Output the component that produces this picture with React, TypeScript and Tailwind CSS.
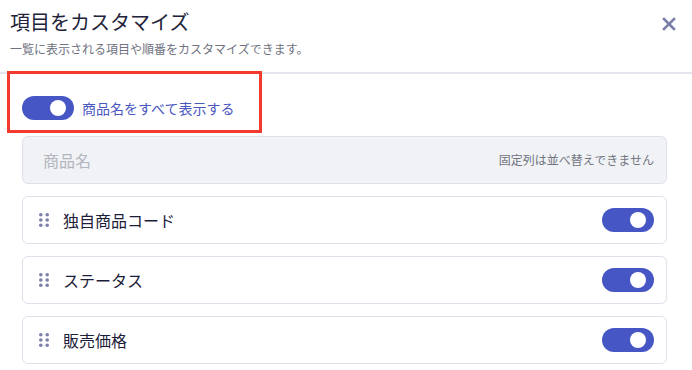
import React, { useState } from 'react'

const font = { fontFamily: '"Noto Sans CJK JP", "Noto Sans", sans-serif' }

function Toggle({ on, onChange }: { on: boolean; onChange: () => void }) {
  return (
    <button
      type="button"
      onClick={onChange}
      className={`relative flex h-[24px] w-[52px] shrink-0 items-center rounded-full transition-colors ${on ? 'bg-[#4656c5]' : 'bg-[#c9ccd8]'}`}
    >
      <span className={`absolute top-[4px] h-[16px] w-[16px] rounded-full bg-white transition-all ${on ? 'left-[28px]' : 'left-[8px]'}`} />
    </button>
  )
}

function DragHandle() {
  return (
    <svg width="10" height="14" viewBox="0 0 10 14" className="shrink-0">
      {[1.8, 7, 12.2].map((y) =>
        [1.8, 8.2].map((x) => <circle key={`${x}-${y}`} cx={x} cy={y} r="1.8" fill="#7b80a8" />),
      )}
    </svg>
  )
}

const columns = ['独自商品コード', 'ステータス', '販売価格']

export default function App() {
  const [showAll, setShowAll] = useState(true)
  const [visible, setVisible] = useState<boolean[]>([true, true, true])

  return (
    <div className="relative h-[370px] w-[692px] overflow-hidden bg-white" style={font}>
      <div className="border-b-2 border-[#e3e6ee] px-[10px] pb-[15px] pt-[8px]">
        <div className="flex items-start justify-between">
          <h1 className="text-[20px] leading-[28px] text-[#22233a]">項目をカスタマイズ</h1>
          <button type="button" className="mr-[6px] mt-[9px] text-[#7a7fa8]">
            <svg width="14" height="14" viewBox="0 0 14 14" fill="none" stroke="currentColor" strokeWidth="2.6" strokeLinecap="square">
              <path d="M2 2l10 10M12 2L2 12" />
            </svg>
          </button>
        </div>
        <p className="mt-[5px] text-[12px] leading-[16px] text-[#6f7280]">一覧に表示される項目や順番をカスタマイズできます。</p>
      </div>

      <div className="px-[22px]">
        <div className="flex items-center gap-[8px] pt-[22px]">
          <Toggle on={showAll} onChange={() => setShowAll(!showAll)} />
          <span className="text-[14px] leading-[20px] text-[#4a57bf]">商品名をすべて表示する</span>
        </div>

        <div className="mt-[16px] flex w-[645px] flex-col gap-[12px]">
          <div className="flex h-[48px] items-center justify-between rounded-[6px] border border-[#dde1ea] bg-[#f0f2f6] pl-[20px] pr-[12px]">
            <span className="text-[16px] text-[#b3b6bf]">商品名</span>
            <span className="text-[12px] text-[#71747e]">固定列は並べ替えできません</span>
          </div>
          {columns.map((label, i) => (
            <div key={label} className="flex h-[48px] items-center justify-between rounded-[6px] border border-[#dde1ea] bg-white pl-[16px] pr-[12px]">
              <div className="flex items-center gap-[14px]">
                <DragHandle />
                <span className="text-[16px] text-[#1d1d3a]">{label}</span>
              </div>
              <Toggle on={visible[i]} onChange={() => setVisible(visible.map((v, j) => (j === i ? !v : v)))} />
            </div>
          ))}
        </div>
      </div>

      <div className="pointer-events-none absolute left-[7px] top-[71px] h-[62px] w-[255px] border-[3px] border-[#f23a2f]" />
    </div>
  )
}
